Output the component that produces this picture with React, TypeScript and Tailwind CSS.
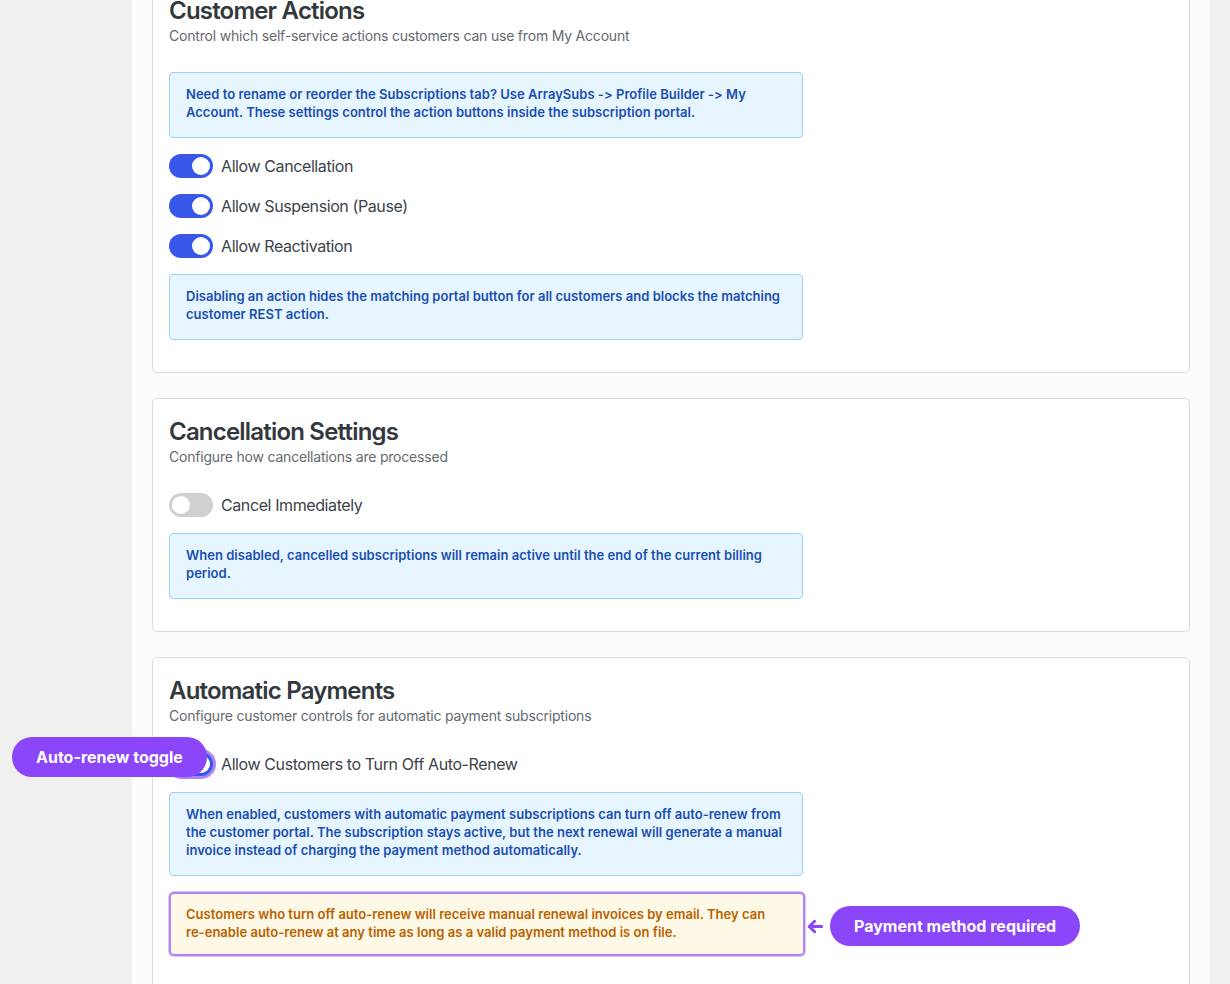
import React from "react";

function Toggle({ on, highlight }: { on: boolean; highlight?: boolean }) {
  return (
    <span
      className={
        "relative inline-flex h-6 w-11 shrink-0 items-center rounded-full " +
        (on ? "bg-[#3858e9] justify-end" : "bg-[#d0d0d0] justify-start") +
        (highlight ? " ring-[3px] ring-[#b084f7]" : "")
      }
    >
      <span className="mx-[3px] block h-[18px] w-[18px] rounded-full bg-white" />
    </span>
  );
}

function ToggleRow({ label, on, highlight }: { label: string; on: boolean; highlight?: boolean }) {
  return (
    <div className="flex h-6 items-center gap-2">
      <Toggle on={on} highlight={highlight} />
      <span className="text-[16px] leading-6 tracking-[-0.4px] text-[#3c434a]">{label}</span>
    </div>
  );
}

function InfoBox({ children }: { children: React.ReactNode }) {
  return (
    <div className="w-[634px] rounded-[4px] border border-[#9dd4f6] bg-[#e6f5fe] px-4 pt-3 pb-4 text-[13px] font-semibold leading-[18px] tracking-[0.02px] text-[#1a4fb4]">
      {children}
    </div>
  );
}

function Card({ title, subtitle, children }: { title: string; subtitle: string; children: React.ReactNode }) {
  return (
    <section className="rounded-[5px] border border-[#dcdcde] bg-white px-4 pt-4 pb-8">
      <h2 className="relative top-[1px] text-[24px] font-semibold leading-8 tracking-[-0.8px] text-[#33383d]">{title}</h2>
      <p className="text-[14px] leading-5 tracking-[-0.2px] text-[#646970]">{subtitle}</p>
      <div className="mt-[26px] flex flex-col gap-4">{children}</div>
    </section>
  );
}

export default function App() {
  return (
    <div
      className="relative flex h-[984px] overflow-hidden bg-[#f0f0f0] [font-feature-settings:'calt'_0,'liga'_0]"
      style={{ fontFamily: "Inter, 'Noto Sans', sans-serif" }}
    >
      <div className="w-[132px] shrink-0" />
      <main className="w-[1078px] shrink-0 bg-[#fcfcfc] px-5">
        <div className="-mt-[23px] flex flex-col gap-[25px]">
          <Card title="Customer Actions" subtitle="Control which self-service actions customers can use from My Account">
            <InfoBox>
              Need to rename or reorder the Subscriptions tab? Use ArraySubs -&gt; Profile Builder -&gt; My Account. These settings control the action buttons inside the subscription portal.
            </InfoBox>
            <ToggleRow label="Allow Cancellation" on />
            <ToggleRow label="Allow Suspension (Pause)" on />
            <ToggleRow label="Allow Reactivation" on />
            <InfoBox>
              Disabling an action hides the matching portal button for all customers and blocks the matching customer REST action.
            </InfoBox>
          </Card>
          <Card title="Cancellation Settings" subtitle="Configure how cancellations are processed">
            <ToggleRow label="Cancel Immediately" on={false} />
            <InfoBox>
              When disabled, cancelled subscriptions will remain active until the end of the current billing period.
            </InfoBox>
          </Card>
          <Card title="Automatic Payments" subtitle="Configure customer controls for automatic payment subscriptions">
            <ToggleRow label="Allow Customers to Turn Off Auto-Renew" on highlight />
            <InfoBox>
              When enabled, customers with automatic payment subscriptions can turn off auto-renew from the customer portal. The subscription stays active, but the next renewal will generate a manual invoice instead of charging the payment method automatically.
            </InfoBox>
            <div className="w-[636px] rounded-[5px] border-2 border-[#b084f7] bg-[#fef8e6] pl-[15px] pr-4 pt-[11px] pb-[13px] text-[13px] font-semibold leading-[18px] tracking-[0.02px] text-[#b86200] ring-1 ring-[#dcc6fb]">
              Customers who turn off auto-renew will receive manual renewal invoices by email. They can{" "}
              <span className="whitespace-nowrap">re-enable</span> auto-renew at any time as long as a valid payment method is on file.
            </div>
            <div className="h-10" />
          </Card>
        </div>
      </main>
      <div className="flex-1" />

      <div className="absolute left-[12px] top-[737px] flex h-10 items-center rounded-full bg-[#8b46f9] px-6 text-[16px] font-bold text-white">
        Auto-renew toggle
      </div>

      <div className="absolute left-[805px] top-[906px] flex items-center gap-[4px]">
        <svg width="21" height="21" viewBox="0 0 24 24" fill="none" stroke="#8b46f9" strokeWidth="3.5" strokeLinecap="round" strokeLinejoin="round">
          <path d="M19 12H5" />
          <path d="M11 18l-6-6 6-6" />
        </svg>
        <div className="flex h-10 items-center rounded-full bg-[#8b46f9] px-6 text-[16px] font-bold text-white">
          Payment method required
        </div>
      </div>
    </div>
  );
}
